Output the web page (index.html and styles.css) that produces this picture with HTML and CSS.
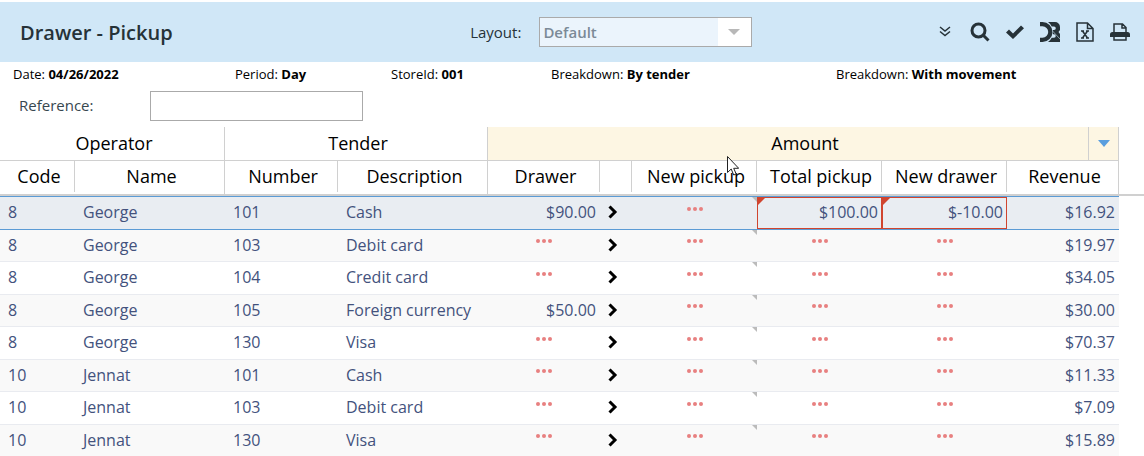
FILE: index.html
```html
<!DOCTYPE html>
<html lang="en">
<head>
<meta charset="utf-8">
<title>Drawer - Pickup</title>
<link rel="stylesheet" href="styles.css">
</head>
<body>
<header class="topbar">
  <h1 class="title">Drawer - Pickup</h1>
  <div class="layout">
    <label for="layout">Layout:</label>
    <span class="select-box">
      <select id="layout" class="select" disabled><option>Default</option></select>
      <svg class="select-arrow" viewBox="0 0 12 6" aria-hidden="true"><path d="M0 0h12L6 6z"/></svg>
    </span>
  </div>
  <div class="tools">
    <button class="tool expand" aria-label="Expand"><svg width="12" height="12" viewBox="0 0 12 12"><path class="line" d="M1 1l5 4 5-4M1 5.500l5 4 5-4"/></svg></button>
    <button class="tool" aria-label="Search"><svg width="20" height="20" viewBox="0 0 20 20"><circle class="line heavy" cx="8.500" cy="8.500" r="6.500"/><path class="line heavy" d="M13.500 13.500l5 5"/></svg></button>
    <button class="tool" aria-label="Confirm"><svg width="18" height="14" viewBox="0 0 18 14"><path d="M0 7.500L3 4.500l4 4L15 .5l3 2.800L7 14z"/></svg></button>
    <button class="tool" aria-label="D3"><svg width="20" height="20" viewBox="0 0 20 20"><path d="M0 0h2.500a10 10 0 0 1 0 20H0v-4.300h2.500a5.700 5.700 0 0 0 0-11.400H0zM8 0h7a5 5 0 0 1 5 5v3l-1.500 2 1.500 2v8H8q2.500-1.700 3.700-4.300H14a1.700 1.700 0 0 0 0-3.500h-1.200q.3-2.200 0-4.200H14a1.700 1.700 0 0 0 0-3.600h-2.300Q10.500 1.700 8 0z"/><path class="cut" d="M12.500 9l7.500 8"/></svg></button>
    <button class="tool" aria-label="Export to Excel"><svg width="18" height="20" viewBox="0 0 18 20"><path class="line" d="M1 1h10.500L17 6.500V19H1zM11.500 1v5.500H17M5 9h3M10 9h3M5 16h3M10 16h3M6.500 9l5 7M11.500 9l-5 7"/></svg></button>
    <button class="tool" aria-label="Print"><svg width="20" height="18" viewBox="0 0 20 18"><path class="line" d="M4 9V1h8.500L16 4.500V9M12 1v4h4"/><path d="M2.500 9h15A2.500 2.500 0 0 1 20 11.500V14H0v-2.500A2.500 2.500 0 0 1 2.500 9z"/><path class="line" d="M4 13V17h12v-4"/></svg></button>
  </div>
</header>
<dl class="filters">
  <div><dt>Date:</dt> <dd>04/26/2022</dd></div>
  <div><dt>Period:</dt> <dd>Day</dd></div>
  <div><dt>StoreId:</dt> <dd>001</dd></div>
  <div><dt>Breakdown:</dt> <dd>By tender</dd></div>
  <div><dt>Breakdown:</dt> <dd>With movement</dd></div>
</dl>
<div class="reference">
  <label for="reference">Reference:</label>
  <input id="reference" type="text">
</div>
<main class="grid-wrap">
<table class="grid">
  <colgroup>
    <col class="c-code"><col class="c-name"><col class="c-number"><col class="c-name"><col class="c-money"><col class="c-go"><col class="c-wide"><col class="c-wide"><col class="c-wide"><col class="c-money"><col>
  </colgroup>
  <thead>
    <tr class="groups">
      <th colspan="2" scope="colgroup">Operator</th>
      <th colspan="2" scope="colgroup">Tender</th>
      <th colspan="6" scope="colgroup" class="active"><div class="group-head"><span>Amount</span><button class="menu" aria-label="Column menu"><svg width="12" height="7" viewBox="0 0 12 7"><path d="M0 0h12L6 7z"/></svg></button></div></th>
      <td></td>
    </tr>
    <tr class="columns">
      <th><span>Code</span></th><th class="end"><span>Name</span></th><th><span>Number</span></th><th class="end"><span>Description</span></th><th><span>Drawer</span></th><th><span></span></th><th><span>New pickup</span></th><th><span>Total pickup</span></th><th><span>New drawer</span></th><th class="end"><span>Revenue</span></th><td></td>
    </tr>
  </thead>
  <tbody id="rows"></tbody>
</table>
</main>
<svg class="cursor" width="12" height="20" viewBox="0 0 12 20" aria-hidden="true"><path d="M.5.5v16l3.700-3.500 2.500 6 2.500-1-2.500-5.700h5z"/></svg>
<script src="grid.js"></script>
</body>
</html>
```
FILE: styles.css
```css
* { box-sizing: border-box; }
body {
  margin: 0;
  padding-top: 2px;
  background: #fff;
  color: #000;
  font-family: "Open Sans", "Noto Sans", sans-serif;
  font-size: 16px;
}
button { padding: 0; border: 0; background: none; color: inherit; font: inherit; }
svg { display: block; }

.topbar {
  display: grid;
  grid-template-columns: 41.1% auto 1fr;
  align-items: center;
  height: 60px;
  background: #d0e7f7;
  color: #263238;
}
.title { margin: 0; padding-left: 20px; font-size: 20px; font-weight: 600; }
.layout { display: flex; align-items: center; gap: 18px; font-size: 15px; }
.select-box { position: relative; display: block; }
.select {
  display: block;
  appearance: none;
  width: 213px;
  height: 30px;
  padding: 0 3px;
  border: 1px solid #aaa;
  border-radius: 0;
  background: linear-gradient(to right, #ebf4fc 178px, #fff 178px);
  color: #7b8a97;
  font: 600 15px "Open Sans", sans-serif;
  opacity: 1;
}
.select-arrow { position: absolute; top: 12px; right: 12px; width: 12px; height: 6px; fill: #b8b8b8; pointer-events: none; }
.tools { display: flex; justify-content: flex-end; align-items: center; gap: 16px; padding-right: 14px; }
.tool { fill: #263238; }
.expand { margin-right: 3px; }
.line { fill: none; stroke: #263238; stroke-width: 1.500; }
.heavy { stroke-width: 3; }
.cut { fill: none; stroke: #d0e7f7; stroke-width: 0.600; }

.filters {
  display: grid;
  grid-template-columns: 222fr 156fr 160fr 285fr 296fr;
  margin: 0;
  padding: 2px 12px 0 13px;
  font-size: 13px;
  line-height: 20px;
}
.filters dt, .filters dd { display: inline; margin: 0; }
.filters dd { font-weight: 700; }
.reference { display: flex; align-items: center; gap: 57px; padding: 7px 0 6px 19px; color: #37474f; font-size: 15px; }
.reference label { padding-bottom: 2px; }
.reference input { width: 213px; height: 30px; border: 1px solid #aaa; font: inherit; }

.grid-wrap { overflow-x: auto; }
.grid { width: 100%; border-collapse: separate; border-spacing: 0; table-layout: fixed; line-height: 24px; }
.grid th, .grid td { padding: 0; }
.grid th { font-size: 18px; font-weight: 400; }
.c-code { width: 75px; }
.c-name { width: 150px; }
.c-number { width: 113px; }
.c-money { width: 112px; }
.c-go { width: 32px; }
.c-wide { width: 125px; }

.groups { height: 34px; }
.grid .groups th { border-right: 1px solid #d0d0d0; border-bottom: 1px solid #d0d0d0; padding: 0 0 2px 4px; }
.grid .groups .active { padding: 0; background: #fdf6e3; }
.group-head { display: flex; height: 33px; padding-left: 34px; line-height: 32px; }
.group-head span { flex: 1; }
.menu { display: grid; place-items: center; width: 30px; border-left: 1px solid #d0d0d0; fill: #5a9ede; }
.columns { height: 35px; }
.columns th, .columns td { border-bottom: 2px solid #d0d0d0; vertical-align: top; }
.columns .end { border-right: 1px solid #d0d0d0; }
.columns th span { display: block; height: 31px; padding-left: 4px; border-right: 1px solid #d0d0d0; line-height: 31px; }
.columns .end span { border-right: 0; }

tbody { color: #43527d; }
tbody tr { height: 33px; }
tbody tr:nth-child(even) { height: 32px; background: #f9f9f9; }
.grid tbody td { position: relative; padding-bottom: 2px; border-bottom: 1px solid #e9ebf0; }
tbody td:not(.money):not(.empty) { padding-left: 8px; }
.grid .money { padding-right: 4px; text-align: right; }
.grid .empty { text-align: center; }
.grid tbody td.blank { border: 0; background: #fff; }
.selected { background: #e9edf2; }
tbody .selected { height: 34px; }
.grid .selected td { border-top: 1px solid #5b9bd5; border-bottom-color: #5b9bd5; }
.go { display: block; }
.go svg { fill: none; stroke: #000; stroke-width: 3; }
.dots { display: flex; justify-content: center; gap: 2px; margin-bottom: 7px; }
.dots i { width: 4px; height: 4px; border-radius: 50%; background: #e88080; }
.editable::after, .changed::before { content: ""; position: absolute; top: 0; border-style: solid; }
.editable::after { right: 0; border-width: 0 5px 5px 0; border-color: transparent #bbb transparent transparent; }
.changed { box-shadow: inset 0 0 0 1px #d0452f; }
.changed::before { left: 0; border-width: 9px 9px 0 0; border-color: #d0452f transparent transparent; }
.cursor { position: absolute; left: 727px; top: 156px; fill: #fff; stroke: #222; pointer-events: none; }
```
FILE: grid.js
```js
const rows = [
  [8, "George", 101, "Cash", "$90.00", "$100.00", "$-10.00", "$16.92"],
  [8, "George", 103, "Debit card", "", "", "", "$19.97"],
  [8, "George", 104, "Credit card", "", "", "", "$34.05"],
  [8, "George", 105, "Foreign currency", "$50.00", "", "", "$30.00"],
  [8, "George", 130, "Visa", "", "", "", "$70.37"],
  [10, "Jennat", 101, "Cash", "", "", "", "$11.33"],
  [10, "Jennat", 103, "Debit card", "", "", "", "$7.09"],
  [10, "Jennat", 130, "Visa", "", "", "", "$15.89"]
];
const money = (value, cls = "") => value
  ? `<td class="money ${cls}">${value}</td>`
  : `<td class="empty"><span class="dots"><i></i><i></i><i></i></span></td>`;
document.getElementById("rows").innerHTML = rows.map((r, i) => `
  <tr class="${i === 0 ? "selected" : ""}">
    <td>${r[0]}</td><td>${r[1]}</td><td>${r[2]}</td><td>${r[3]}</td>
    ${money(r[4])}
    <td><button class="go" aria-label="Open"><svg width="10" height="14" viewBox="0 0 10 14"><path d="M1.500 1.500L7 7l-5.500 5.500"/></svg></button></td>
    <td class="empty editable"><span class="dots"><i></i><i></i><i></i></span></td>
    ${money(r[5], "changed")}${money(r[6], "changed")}${money(r[7])}
    <td class="blank"></td>
  </tr>`).join("");
```
